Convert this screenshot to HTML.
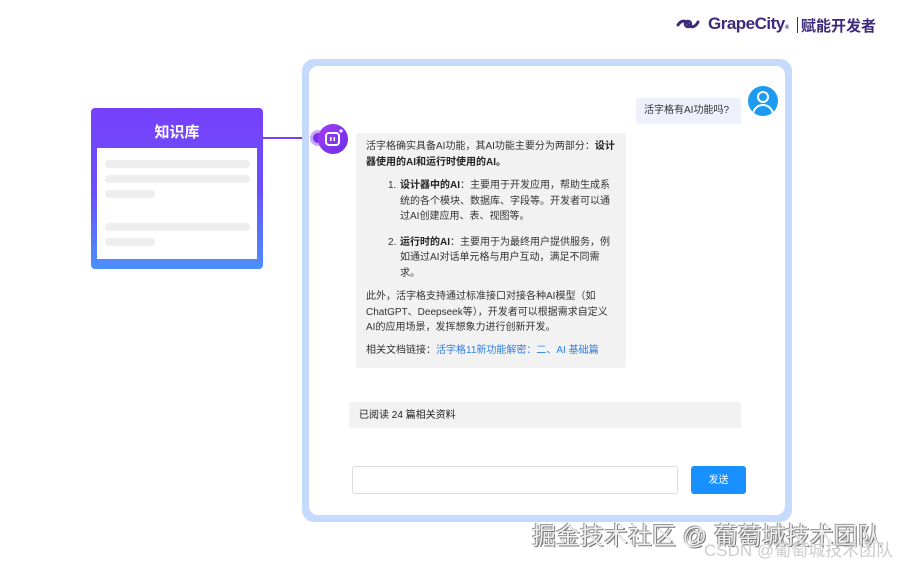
<!DOCTYPE html>
<html><head><meta charset="utf-8"><style>
*{margin:0;padding:0;box-sizing:border-box}
body{width:900px;height:562px;background:#fff;position:relative;overflow:hidden;font-family:"Liberation Sans","Noto Sans CJK SC",sans-serif;color:#333}
.abs{position:absolute}
.frame{left:302px;top:59px;width:490px;height:463px;background:#c5dafc;border-radius:12px}
.inner{left:309px;top:66px;width:476px;height:449px;background:#fff;border-radius:9px}
.bub{left:356px;top:133px;width:270px;height:235px;background:#f2f2f2;border-radius:3px;font-size:10px;line-height:15.5px;padding:6px 9px 0 10px;color:#333}
.bub b{color:#222}
.li{padding-left:34px;position:relative;margin-top:8px}
.li span.n{position:absolute;left:22px}
.kb{left:91px;top:108px;width:172px;height:161px;border-radius:4px;background:linear-gradient(#7740fb,#6a4ffb 50%,#4c8ffb)}
.bar{position:absolute;left:8px;height:8px;background:#eee;border-radius:4px}
</style></head><body>
<div class="abs" style="left:676px;top:16px;width:24px;height:16px">
<svg width="24" height="16" viewBox="0 0 24 16"><path d="M2 9 C5 4 10 4 12 8 C14 12 19 12 22 6" stroke="#3c2a7c" stroke-width="3" fill="none" stroke-linecap="round"/><circle cx="12" cy="8" r="3" fill="none" stroke="#3c2a7c" stroke-width="2.5"/></svg></div>
<div class="abs" style="left:708px;top:14px;font-size:17px;font-weight:bold;color:#3c2a7c;letter-spacing:-0.5px">GrapeCity<span style="font-size:6px">®</span></div>
<div class="abs" style="left:797px;top:17px;width:1px;height:16px;background:#3c2a7c"></div>
<div class="abs" style="left:801px;top:15px;font-size:15px;font-weight:bold;color:#3c2a7c">赋能开发者</div>

<div class="abs kb"><div style="text-align:center;color:#fff;font-weight:bold;font-size:15px;margin-top:13px">知识库</div>
<div class="abs" style="left:6px;top:40px;width:160px;height:111px;background:#fff">
<div class="bar" style="top:12px;width:145px"></div><div class="bar" style="top:27px;width:145px"></div><div class="bar" style="top:42px;width:50px"></div><div class="bar" style="top:75px;width:145px"></div><div class="bar" style="top:90px;width:50px"></div></div></div>
<div class="abs" style="left:263px;top:137px;width:55px;height:1.5px;background:#7b3ff5"></div>

<div class="abs frame"></div><div class="abs inner"></div>
<div class="abs" style="left:310px;top:130px;width:16px;height:16px;border-radius:50%;background:#c9a8fb"></div>
<div class="abs" style="left:313px;top:133px;width:10px;height:10px;border-radius:50%;background:#7b2ff0"></div>
<div class="abs" style="left:318px;top:124px;width:30px;height:30px;border-radius:50%;background:linear-gradient(135deg,#a23ff2,#6a2ee8)">
<svg width="30" height="30"><rect x="8" y="9" width="13" height="12" rx="3" fill="none" stroke="#fff" stroke-width="2"/><rect x="12" y="13" width="1.6" height="4" fill="#fff"/><rect x="15.5" y="13" width="1.6" height="4" fill="#fff"/><path d="M23 5v4M21 7h4" stroke="#fff" stroke-width="1.2"/></svg></div>
<div class="abs" style="left:748px;top:86px;width:30px;height:30px;border-radius:50%;background:#1c9bf0;overflow:hidden">
<div class="abs" style="left:9px;top:5px;width:12px;height:12px;border-radius:50%;border:2px solid #fff"></div>
<div class="abs" style="left:4px;top:18px;width:22px;height:16px;border-radius:11px 11px 0 0;border:2px solid #fff"></div></div>
<div class="abs" style="left:636px;top:98px;width:105px;height:26px;background:#eef0fb;border-radius:2px;font-size:10px;line-height:26px;padding-left:8px">活字格有AI功能吗?</div>

<div class="abs bub">
<div>活字格确实具备AI功能，其AI功能主要分为两部分：<b>设计器使用的AI和运行时使用的AI。</b></div>
<div class="li"><span class="n">1.</span><b>设计器中的AI</b>：主要用于开发应用，帮助生成系统的各个模块、数据库、字段等。开发者可以通过AI创建应用、表、视图等。</div>
<div class="li" style="margin-top:10px"><span class="n">2.</span><b>运行时的AI</b>：主要用于为最终用户提供服务，例如通过AI对话单元格与用户互动，满足不同需求。</div>
<div style="margin-top:8px">此外，活字格支持通过标准接口对接各种AI模型（如ChatGPT、Deepseek等），开发者可以根据需求自定义AI的应用场景，发挥想象力进行创新开发。</div>
<div style="margin-top:7px">相关文档链接：<span style="color:#2f7ee8">活字格11新功能解密：二、AI 基础篇</span></div>
</div>

<div class="abs" style="left:349px;top:402px;width:392px;height:26px;background:#f2f2f2;font-size:10px;line-height:27px;padding-left:10px;color:#222">已阅读 24 篇相关资料</div>
<div class="abs" style="left:352px;top:466px;width:326px;height:28px;border:1px solid #ddd;border-radius:3px;background:#fff"></div>
<div class="abs" style="left:691px;top:466px;width:55px;height:28px;background:#1890ff;border-radius:3px;color:#fff;font-size:10px;line-height:29px;text-align:center">发送</div>

<div class="abs" style="left:532px;top:516px;font-size:24px;color:#eee;text-shadow:1px 1px 0 #777,-1px -1px 0 #999;white-space:nowrap">掘金技术社区 @ 葡萄城技术团队</div>
<div class="abs" style="left:704px;top:536px;font-size:17px;color:#ccc;white-space:nowrap">CSDN @葡萄城技术团队</div>
</body></html>
